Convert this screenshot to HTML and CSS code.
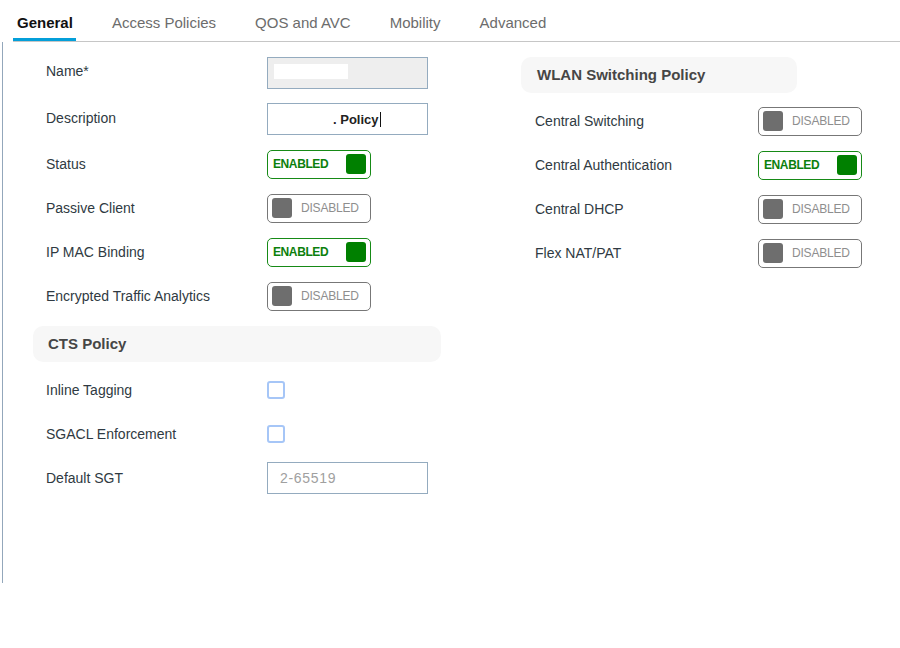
FILE: index.html
```html
<!DOCTYPE html>
<html lang="en">
<head>
    <meta charset="UTF-8">
    <meta name="viewport" content="width=device-width, initial-scale=1.0">
    <title>Policy Profile - General</title>
    <link rel="stylesheet" href="styles.css">
</head>
<body>
    <div class="tabs">
        <span class="tab active">General</span>
        <span class="tab">Access Policies</span>
        <span class="tab">QOS and AVC</span>
        <span class="tab">Mobility</span>
        <span class="tab">Advanced</span>
    </div>

    <div class="panel">
        <div class="col col-left">
            <div class="row row-name">
                <span class="label">Name*</span>
                <div class="field locked"><span class="redact"></span></div>
            </div>
            <div class="row row-desc">
                <span class="label">Description</span>
                <div class="field"><span class="value">. Policy</span></div>
            </div>
            <div class="row">
                <span class="label">Status</span>
                <div class="toggle on"><span>ENABLED</span><span class="knob"></span></div>
            </div>
            <div class="row">
                <span class="label">Passive Client</span>
                <div class="toggle off"><span class="knob"></span><span>DISABLED</span></div>
            </div>
            <div class="row">
                <span class="label">IP MAC Binding</span>
                <div class="toggle on"><span>ENABLED</span><span class="knob"></span></div>
            </div>
            <div class="row">
                <span class="label">Encrypted Traffic Analytics</span>
                <div class="toggle off"><span class="knob"></span><span>DISABLED</span></div>
            </div>

            <div class="section-head">CTS Policy</div>

            <div class="row">
                <span class="label">Inline Tagging</span>
                <span class="check"></span>
            </div>
            <div class="row">
                <span class="label">SGACL Enforcement</span>
                <span class="check"></span>
            </div>
            <div class="row">
                <span class="label">Default SGT</span>
                <div class="field"><span class="placeholder">2-65519</span></div>
            </div>
        </div>

        <div class="col col-right">
            <div class="section-head narrow">WLAN Switching Policy</div>
            <div class="row">
                <span class="label">Central Switching</span>
                <div class="toggle off"><span class="knob"></span><span>DISABLED</span></div>
            </div>
            <div class="row">
                <span class="label">Central Authentication</span>
                <div class="toggle on"><span>ENABLED</span><span class="knob"></span></div>
            </div>
            <div class="row">
                <span class="label">Central DHCP</span>
                <div class="toggle off"><span class="knob"></span><span>DISABLED</span></div>
            </div>
            <div class="row">
                <span class="label">Flex NAT/PAT</span>
                <div class="toggle off"><span class="knob"></span><span>DISABLED</span></div>
            </div>
        </div>
    </div>
</body>
</html>
```
FILE: styles.css
```css
* {
    box-sizing: border-box;
}
body {
    margin: 0;
    font-family: "Liberation Sans", Arial, sans-serif;
    color: #2f3a42;
    background: #ffffff;
}

/* tab strip */
.tabs {
    display: flex;
    align-items: flex-end;
    gap: 32px;
    height: 42px;
    margin-left: 13px;
    border-bottom: 1px solid #c6c6c6;
}
.tab {
    font-size: 15px;
    line-height: 18px;
    padding: 0 3px 6px 4px;
    border-bottom: 3px solid transparent;
    color: #6c6c6c;
}
.tab.active {
    color: #111111;
    font-weight: bold;
    border-bottom-color: #049fd9;
}

/* form area */
.panel {
    display: flex;
    gap: 80px;
    height: 541px;
    margin-left: 2px;
    padding: 7px 0 0 30px;
    border-left: 1px solid #93a7bb;
}
.col-left {
    width: 408px;
}
.col-right {
    width: 341px;
    padding-top: 8px;
}
.row {
    display: flex;
    align-items: center;
    height: 44px;
    padding-left: 13px;
}
.row-name {
    height: 47px;
}
.row-name .label {
    margin-top: -4px;
}
.row-desc {
    height: 46px;
}
.row-desc .label {
    margin-top: -2px;
}
.label {
    width: 221px;
    font-size: 14px;
}
.col-right .row {
    padding-left: 14px;
}
.col-right .label {
    width: 223px;
}

.section-head {
    display: flex;
    align-items: center;
    height: 36px;
    margin: 8px 0 6px;
    padding: 0 0 2px 15px;
    background: #f7f7f7;
    border-radius: 10px;
    font-size: 15px;
    font-weight: bold;
    color: #464646;
}
.section-head.narrow {
    width: 276px;
    margin-top: 0;
    padding-left: 16px;
}

/* text inputs */
.field {
    display: flex;
    align-items: center;
    width: 161px;
    height: 32px;
    padding-left: 12px;
    border: 1px solid #94abbf;
    background: #ffffff;
    font-size: 14px;
}
.field.locked {
    background: #eeeeee;
    padding-left: 6px;
}
.redact {
    width: 74px;
    height: 15px;
    margin-top: -2px;
    background: #ffffff;
}
.value {
    display: flex;
    align-items: center;
    padding-left: 53px;
    font-size: 13px;
    font-weight: bold;
    color: #222222;
}
.value::after {
    content: "";
    width: 1px;
    height: 15px;
    margin-left: 1px;
    background: #111111;
}
.placeholder {
    color: #a0a0a0;
    letter-spacing: 0.7px;
}

/* on/off switches */
.toggle {
    display: flex;
    align-items: center;
    width: 104px;
    height: 29px;
    border: 1px solid;
    border-radius: 5px;
    font-size: 12px;
}
.toggle.on {
    justify-content: space-between;
    padding: 0 4px 0 5px;
    border-color: #168a16;
    color: #0c800c;
    font-weight: bold;
    letter-spacing: -0.4px;
}
.toggle.off {
    gap: 9px;
    padding-left: 4px;
    border-color: #777777;
    color: #8e8e8e;
    letter-spacing: -0.2px;
}
.knob {
    width: 20px;
    height: 20px;
    border-radius: 3px;
}
.on .knob {
    background: #008000;
}
.off .knob {
    background: #6e6e6e;
}

.check {
    width: 18px;
    height: 18px;
    border: 2px solid #a6c6f7;
    border-radius: 3px;
}
```
